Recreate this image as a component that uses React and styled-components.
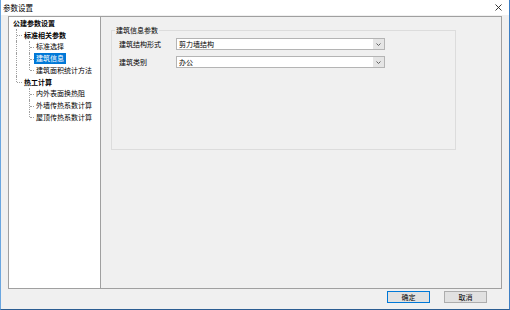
import React from 'react'
import styled, { createGlobalStyle } from 'styled-components'

const GlobalStyle = createGlobalStyle`
    html, body {
        margin: 0;
        padding: 0;
        background: #f0f0f0;
    }
    * {
        box-sizing: border-box;
    }
`

const FONT = `"Noto Sans CJK SC", "Microsoft YaHei", sans-serif`

const Window = styled.div`
    width: 510px;
    height: 310px;
    display: flex;
    flex-direction: column;
    background: #f0f0f0;
    border-left: 1px solid #6aa6e0;
    border-right: 1px solid #3d7fc4;
    border-bottom: 1px solid #2b5d92;
    font-family: ${FONT};
    font-size: 7px;
    color: #000;
`
const TitleBar = styled.div`
    height: 15px;
    flex-shrink: 0;
    background: #fff;
    display: flex;
    align-items: center;
    justify-content: space-between;
    padding: 0 7px 0 2px;
`
const Title = styled.span`
    font-size: 7.5px;
    line-height: 15px;
`
const Close = styled.span`
    display: flex;
    align-items: center;
`
const Body = styled.div`
    padding: 1px 7px 0 7px;
`
const Panel = styled.div`
    height: 273px;
    display: flex;
    border: 1px solid #a0a0a0;
`
const TreePane = styled.div`
    width: 92px;
    flex-shrink: 0;
    background: #fff;
    border-right: 1px solid #a0a0a0;
    padding-top: 0.5px;
`
const TreeRow = styled.div`
    height: 11.75px;
    display: flex;
    align-items: stretch;
    padding-left: ${props => props.$root ? '2px' : '0'};
`
const Guide = styled.span`
    position: relative;
    width: ${props => props.$w || 13}px;
    flex-shrink: 0;
    &::before {
        content: '';
        display: ${props => props.$kind === 'none' ? 'none' : 'block'};
        position: absolute;
        left: 7px;
        top: 0;
        height: ${props => props.$kind === 'end' ? '50%' : '100%'};
        border-left: 1px dotted #a0a0a0;
    }
    &::after {
        content: '';
        display: ${props => props.$kind === 'tee' || props.$kind === 'end' ? 'block' : 'none'};
        position: absolute;
        left: 8px;
        right: 0;
        top: 50%;
        border-top: 1px dotted #a0a0a0;
    }
`
const TreeLabel = styled.span`
    align-self: center;
    height: 11px;
    line-height: 11px;
    padding: 0 2px;
    white-space: nowrap;
    font-weight: ${props => props.$bold ? 700 : 400};
    background: ${props => props.$selected ? '#0078d7' : 'transparent'};
    color: ${props => props.$selected ? '#fff' : '#000'};
`
const ContentPane = styled.div`
    flex: 1;
    padding: 13px 0 0 10px;
`
const GroupBox = styled.div`
    position: relative;
    width: 345px;
    height: 120px;
    border: 1px solid #dcdcdc;
    padding: 7px 0 0 7px;
    display: flex;
    flex-direction: column;
    gap: 6px;
`
const Caption = styled.span`
    position: absolute;
    left: 3px;
    top: -6px;
    padding: 0 1px;
    line-height: 11px;
    background: #f0f0f0;
`
const FieldRow = styled.div`
    display: flex;
    align-items: center;
    height: 12px;
`
const FieldLabel = styled.span`
    width: 57px;
    flex-shrink: 0;
`
const Select = styled.div`
    width: 209px;
    height: 12px;
    display: flex;
    background: #fff;
    border: 1px solid #b4b4b4;
`
const SelectValue = styled.span`
    flex: 1;
    padding-left: 2px;
    line-height: 10px;
`
const SelectArrow = styled.span`
    width: 11px;
    display: flex;
    align-items: center;
    justify-content: center;
    background: #e5e5e5;
`
const Footer = styled.div`
    display: flex;
    justify-content: flex-end;
    gap: 14px;
    padding: 2px 22px 0 0;
`
const Button = styled.button`
    width: 43px;
    height: 12px;
    padding: 0;
    font-family: ${FONT};
    font-size: 7px;
    line-height: 10px;
    color: #000;
    background: #e1e1e1;
    border: 1px solid ${props => props.$primary ? '#0078d7' : '#adadad'};
`

const Chevron = () => (
    <svg width="5" height="3" viewBox="0 0 5 3">
        <path d="M0.5 0.5 L2.5 2.5 L4.5 0.5" fill="none" stroke="#606060" strokeWidth="1" />
    </svg>
)

const tree = [
    { label: '公建参数设置', bold: true, guides: [] },
    { label: '标准相关参数', bold: true, guides: ['tee'] },
    { label: '标准选择', guides: ['pass', 'tee'] },
    { label: '建筑信息', guides: ['pass', 'tee'], selected: true },
    { label: '建筑面积统计方法', guides: ['pass', 'end'] },
    { label: '热工计算', bold: true, guides: ['end'] },
    { label: '内外表面换热阻', guides: ['none', 'tee'] },
    { label: '外墙传热系数计算', guides: ['none', 'tee'] },
    { label: '屋顶传热系数计算', guides: ['none', 'end'] },
]

export default function App() {
    return (
        <>
            <GlobalStyle />
            <Window>
                <TitleBar>
                    <Title>参数设置</Title>
                    <Close>
                        <svg width="7" height="7" viewBox="0 0 7 7">
                            <path d="M0.5 0.5 L6.5 6.5 M6.5 0.5 L0.5 6.5" stroke="#222" strokeWidth="0.9" />
                        </svg>
                    </Close>
                </TitleBar>
                <Body>
                    <Panel>
                        <TreePane>
                            {tree.map((node, i) => (
                                <TreeRow key={i} $root={node.guides.length === 0}>
                                    {node.guides.map((g, j) => (
                                        <Guide key={j} $kind={g} $w={j === 0 ? 13 : 12} />
                                    ))}
                                    <TreeLabel $bold={node.bold} $selected={node.selected}>{node.label}</TreeLabel>
                                </TreeRow>
                            ))}
                        </TreePane>
                        <ContentPane>
                            <GroupBox>
                                <Caption>建筑信息参数</Caption>
                                <FieldRow>
                                    <FieldLabel>建筑结构形式</FieldLabel>
                                    <Select>
                                        <SelectValue>剪力墙结构</SelectValue>
                                        <SelectArrow><Chevron /></SelectArrow>
                                    </Select>
                                </FieldRow>
                                <FieldRow>
                                    <FieldLabel>建筑类别</FieldLabel>
                                    <Select>
                                        <SelectValue>办公</SelectValue>
                                        <SelectArrow><Chevron /></SelectArrow>
                                    </Select>
                                </FieldRow>
                            </GroupBox>
                        </ContentPane>
                    </Panel>
                </Body>
                <Footer>
                    <Button $primary>确定</Button>
                    <Button>取消</Button>
                </Footer>
            </Window>
        </>
    )
}
